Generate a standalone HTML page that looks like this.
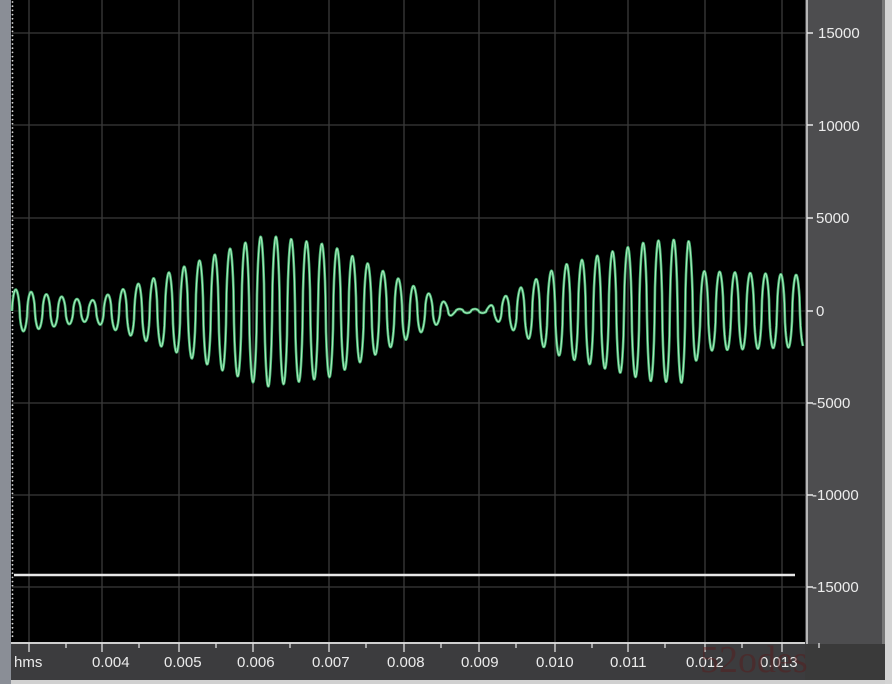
<!DOCTYPE html>
<html><head><meta charset="utf-8"><style>
html,body{margin:0;padding:0;width:892px;height:684px;overflow:hidden;background:#000;font-family:"Liberation Sans",sans-serif}
</style></head><body>
<svg width="892" height="684" viewBox="0 0 892 684" xmlns="http://www.w3.org/2000/svg">
<rect x="0" y="0" width="892" height="684" fill="#000"/>
<rect x="0" y="0" width="11" height="684" fill="#8a8e96"/>
<g id="dots"></g>
<g stroke="#3a3a3a" stroke-width="1.3" id="grid"></g>
<line x1="14" y1="575" x2="795" y2="575" stroke="#e8e8e8" stroke-width="2.5"/>
<line x1="14" y1="311" x2="805" y2="311" stroke="#2a2a2a" stroke-width="1"/>
<path id="wave" fill="none" stroke="#45b872" stroke-width="2.6" stroke-linejoin="round"/>
<path id="wave2" fill="none" stroke="#b8ecc6" stroke-width="0.9" stroke-linejoin="round"/>
<rect x="805" y="0" width="78" height="644" fill="#4d4d4f"/>
<line x1="807" y1="0" x2="807" y2="644" stroke="#d8d8d8" stroke-width="1.5"/>
<rect x="885" y="0" width="7" height="684" fill="#d4d4d4"/>
<rect x="882" y="0" width="3" height="684" fill="#777"/>
<g fill="#ececec" font-size="15">
<text x="818" y="38">15000</text>
<text x="818" y="131">10000</text>
<text x="816" y="223">5000</text>
<text x="816" y="316">0</text>
<text x="812" y="408">-5000</text>
<text x="812" y="500">-10000</text>
<text x="812" y="592">-15000</text>
</g>
<g stroke="#e8e8e8" stroke-width="1.5">
<line x1="807" y1="33" x2="813" y2="33"/><line x1="807" y1="125" x2="813" y2="125"/><line x1="807" y1="218" x2="813" y2="218"/><line x1="807" y1="311" x2="813" y2="311"/><line x1="807" y1="403" x2="813" y2="403"/><line x1="807" y1="495" x2="813" y2="495"/><line x1="807" y1="587" x2="813" y2="587"/>
</g>
<rect x="11" y="642" width="794" height="42" fill="#3c3c3e"/>
<rect x="805" y="644" width="80" height="40" fill="#3a3a3a"/>
<line x1="11" y1="643" x2="805" y2="643" stroke="#cfcfcf" stroke-width="2"/>
<rect x="11" y="680" width="874" height="4" fill="#d0d0d0"/>
<g id="xt" stroke="#e0e0e0" stroke-width="1.3"></g>
<g fill="#ececec" font-size="15">
<text x="14" y="667">hms</text>
<text x="92" y="667">0.004</text><text x="164" y="667">0.005</text><text x="237" y="667">0.006</text><text x="312" y="667">0.007</text><text x="387" y="667">0.008</text><text x="461" y="667">0.009</text><text x="536" y="667">0.010</text><text x="610" y="667">0.011</text><text x="686" y="667">0.012</text><text x="760" y="667">0.013</text>
</g>
<text x="700" y="672" fill="#5a1a1a" font-family="Liberation Serif,serif" font-size="38" opacity="0.45">52odes</text>
</svg>
<script>
var ns="http://www.w3.org/2000/svg";
var g=document.getElementById('grid');
function L(p,a,b,c,d){var l=document.createElementNS(ns,'line');l.setAttribute('x1',a);l.setAttribute('y1',b);l.setAttribute('x2',c);l.setAttribute('y2',d);p.appendChild(l);}
var xs=[29,102,179,253,329,404,479,555,628,705,782];
xs.forEach(function(x){L(g,x,0,x,642);});
[33,125,218,403,495,587].forEach(function(y){L(g,12,y,805,y);});
var xt=document.getElementById('xt');
xs.forEach(function(x){L(xt,x,643,x,652);L(xt,x+37,643,x+37,648);});
var d=document.getElementById('dots');
for(var y=2;y<640;y+=4.2){var c=document.createElementNS(ns,'circle');c.setAttribute('cx',12.5);c.setAttribute('cy',y);c.setAttribute('r',0.9);c.setAttribute('fill','#ddd');d.appendChild(c);}
var E=[[12,22],[90,10],[160,35],[265,76],[330,66],[440,12],[455,2],[485,2],[500,12],[560,45],[650,70],[688,72],[700,40],[800,36]];
function env(x){for(var i=0;i<E.length-1;i++){if(x<=E[i+1][0]){var t=(x-E[i][0])/(E[i+1][0]-E[i][0]);return E[i][1]+t*(E[i+1][1]-E[i][1]);}}return E[E.length-1][1];}
var p='';
for(var x=12;x<=803;x+=0.5){var ph=(x-12)/15.3*2*Math.PI;var s=Math.sin(ph);s=Math.sign(s)*Math.pow(Math.abs(s),0.6);var y=311-env(x)*s;p+=(x==12?'M':'L')+x+' '+y.toFixed(1);}
document.getElementById('wave').setAttribute('d',p);
document.getElementById('wave2').setAttribute('d',p);
</script>
</body></html>
